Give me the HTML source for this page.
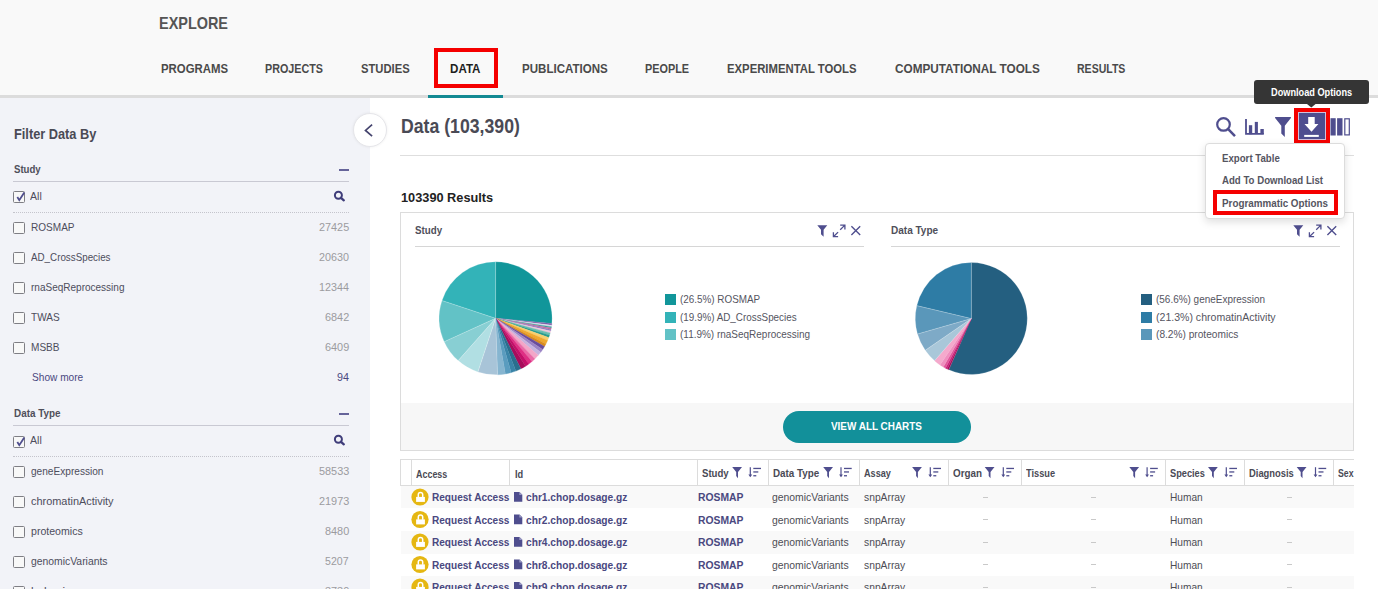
<!DOCTYPE html>
<html><head><meta charset="utf-8"><style>
html,body{margin:0;padding:0;width:1378px;height:589px;overflow:hidden;background:#fff;}
body{position:relative;font-family:"Liberation Sans",sans-serif;}
.t{position:absolute;white-space:nowrap;line-height:1;font-family:"Liberation Sans",sans-serif;}
.cb{position:absolute;width:10px;height:10px;border:1px solid #7e7e84;background:#f8f8f8;border-radius:1.5px;}
</style></head><body>
<div style="position:absolute;left:0;top:0;width:1378px;height:95px;background:#f9f9f9"></div>
<div style="position:absolute;left:0;top:95px;width:1378px;height:3px;background:#dcdcdc"></div>
<div style="position:absolute;left:428px;top:95px;width:75px;height:3px;background:#138a93"></div>
<div class="t" style="left:159.30px;top:15px;font-size:17px;font-weight:bold;color:#555;letter-spacing:0.000px;transform:scaleX(0.8492);transform-origin:0 0;">EXPLORE</div>
<div class="t" style="left:160.50px;top:62px;font-size:13.5px;font-weight:bold;color:#4a4a4a;letter-spacing:0.000px;transform:scaleX(0.8428);transform-origin:0 0;">PROGRAMS</div>
<div class="t" style="left:265.00px;top:62px;font-size:13.5px;font-weight:bold;color:#4a4a4a;letter-spacing:0.000px;transform:scaleX(0.7973);transform-origin:0 0;">PROJECTS</div>
<div class="t" style="left:360.60px;top:62px;font-size:13.5px;font-weight:bold;color:#4a4a4a;letter-spacing:0.000px;transform:scaleX(0.8325);transform-origin:0 0;">STUDIES</div>
<div class="t" style="left:450.30px;top:62px;font-size:13.5px;font-weight:bold;color:#1e1e1e;letter-spacing:0.000px;transform:scaleX(0.8592);transform-origin:0 0;">DATA</div>
<div class="t" style="left:521.60px;top:62px;font-size:13.5px;font-weight:bold;color:#4a4a4a;letter-spacing:0.000px;transform:scaleX(0.8559);transform-origin:0 0;">PUBLICATIONS</div>
<div class="t" style="left:645.00px;top:62px;font-size:13.5px;font-weight:bold;color:#4a4a4a;letter-spacing:0.000px;transform:scaleX(0.8037);transform-origin:0 0;">PEOPLE</div>
<div class="t" style="left:727.20px;top:62px;font-size:13.5px;font-weight:bold;color:#4a4a4a;letter-spacing:0.000px;transform:scaleX(0.8382);transform-origin:0 0;">EXPERIMENTAL TOOLS</div>
<div class="t" style="left:894.80px;top:62px;font-size:13.5px;font-weight:bold;color:#4a4a4a;letter-spacing:0.000px;transform:scaleX(0.8710);transform-origin:0 0;">COMPUTATIONAL TOOLS</div>
<div class="t" style="left:1077.00px;top:62px;font-size:13.5px;font-weight:bold;color:#4a4a4a;letter-spacing:0.000px;transform:scaleX(0.7806);transform-origin:0 0;">RESULTS</div>
<div style="position:absolute;left:434px;top:47.6px;width:55.6px;height:32.7px;border:4.3px solid #f50000"></div>
<div style="position:absolute;left:0;top:98px;width:370px;height:491px;background:#f2f3f8"></div>
<div class="t" style="left:13.70px;top:127px;font-size:14px;font-weight:bold;color:#4a4a55;letter-spacing:0.000px;transform:scaleX(0.9119);transform-origin:0 0;">Filter Data By</div>
<div class="t" style="left:13.50px;top:164px;font-size:11.5px;font-weight:bold;color:#4f4f5a;letter-spacing:0.000px;transform:scaleX(0.8357);transform-origin:0 0;">Study</div>
<div style="position:absolute;left:339px;top:168.9px;width:10px;height:2px;background:#66649a"></div>
<div style="position:absolute;left:13px;top:181px;width:336px;height:1px;background:#c9c9d3"></div>
<div class="cb" style="left:13px;top:191.2px"></div>
<svg style="position:absolute;left:13px;top:190.2px" width="14" height="14" viewBox="0 0 14 14"><path d="M4.3 7 L6.3 10.2 L11.3 2.6" fill="none" stroke="#4f4e8e" stroke-width="1.8"/></svg>
<div class="t" style="left:30.20px;top:191px;font-size:11px;font-weight:normal;color:#4d4d5c;letter-spacing:0.000px;transform:scaleX(0.9590);transform-origin:0 0;">All</div>
<svg style="position:absolute;left:333px;top:189.8px" width="13" height="12" viewBox="0 0 13 12"><circle cx="5.4" cy="5.2" r="3.5" fill="none" stroke="#3f3d7a" stroke-width="2"/><path d="M8 7.8 L10.8 10.3" stroke="#3f3d7a" stroke-width="2.3" stroke-linecap="round"/></svg>
<div style="position:absolute;left:13px;top:211.5px;width:336px;height:0;border-top:1px dotted #c4c4cc"></div>
<div class="cb" style="left:13px;top:222.1px"></div>
<div class="t" style="left:30.50px;top:222px;font-size:11px;font-weight:normal;color:#4d4d5c;letter-spacing:0.000px;transform:scaleX(0.9129);transform-origin:0 0;">ROSMAP</div>
<div class="t" style="left:318.70px;top:222px;font-size:11px;font-weight:normal;color:#9b9b9f;letter-spacing:0.000px;transform:scaleX(0.9869);transform-origin:0 0;">27425</div>
<div class="cb" style="left:13px;top:252.1px"></div>
<div class="t" style="left:30.50px;top:252px;font-size:11px;font-weight:normal;color:#4d4d5c;letter-spacing:0.000px;transform:scaleX(0.8908);transform-origin:0 0;">AD_CrossSpecies</div>
<div class="t" style="left:319.00px;top:252px;font-size:11px;font-weight:normal;color:#9b9b9f;letter-spacing:0.000px;transform:scaleX(0.9771);transform-origin:0 0;">20630</div>
<div class="cb" style="left:13px;top:282.1px"></div>
<div class="t" style="left:30.50px;top:282px;font-size:11px;font-weight:normal;color:#4d4d5c;letter-spacing:0.000px;transform:scaleX(0.9100);transform-origin:0 0;">rnaSeqReprocessing</div>
<div class="t" style="left:319.00px;top:282px;font-size:11px;font-weight:normal;color:#9b9b9f;letter-spacing:0.000px;transform:scaleX(0.9771);transform-origin:0 0;">12344</div>
<div class="cb" style="left:13px;top:312.1px"></div>
<div class="t" style="left:30.50px;top:312px;font-size:11px;font-weight:normal;color:#4d4d5c;letter-spacing:0.000px;transform:scaleX(0.9155);transform-origin:0 0;">TWAS</div>
<div class="t" style="left:324.70px;top:312px;font-size:11px;font-weight:normal;color:#9b9b9f;letter-spacing:0.000px;transform:scaleX(0.9898);transform-origin:0 0;">6842</div>
<div class="cb" style="left:13px;top:342.1px"></div>
<div class="t" style="left:30.50px;top:342px;font-size:11px;font-weight:normal;color:#4d4d5c;letter-spacing:0.000px;transform:scaleX(0.9149);transform-origin:0 0;">MSBB</div>
<div class="t" style="left:324.70px;top:342px;font-size:11px;font-weight:normal;color:#9b9b9f;letter-spacing:0.000px;transform:scaleX(0.9898);transform-origin:0 0;">6409</div>
<div class="t" style="left:32.00px;top:372px;font-size:11px;font-weight:normal;color:#4a4880;letter-spacing:0.000px;transform:scaleX(0.9200);transform-origin:0 0;">Show more</div>
<div class="t" style="left:337.00px;top:372px;font-size:11px;font-weight:normal;color:#4a4880;letter-spacing:0.000px;transform:scaleX(0.9796);transform-origin:0 0;">94</div>
<div class="t" style="left:13.50px;top:408px;font-size:11.5px;font-weight:bold;color:#4f4f5a;letter-spacing:0.000px;transform:scaleX(0.8595);transform-origin:0 0;">Data Type</div>
<div style="position:absolute;left:339px;top:412.8px;width:10px;height:2px;background:#66649a"></div>
<div style="position:absolute;left:13px;top:425px;width:336px;height:1px;background:#c9c9d3"></div>
<div class="cb" style="left:13px;top:435.5px"></div>
<svg style="position:absolute;left:13px;top:434.5px" width="14" height="14" viewBox="0 0 14 14"><path d="M4.3 7 L6.3 10.2 L11.3 2.6" fill="none" stroke="#4f4e8e" stroke-width="1.8"/></svg>
<div class="t" style="left:30.20px;top:435px;font-size:11px;font-weight:normal;color:#4d4d5c;letter-spacing:0.000px;transform:scaleX(0.9590);transform-origin:0 0;">All</div>
<svg style="position:absolute;left:333px;top:434.1px" width="13" height="12" viewBox="0 0 13 12"><circle cx="5.4" cy="5.2" r="3.5" fill="none" stroke="#3f3d7a" stroke-width="2"/><path d="M8 7.8 L10.8 10.3" stroke="#3f3d7a" stroke-width="2.3" stroke-linecap="round"/></svg>
<div style="position:absolute;left:13px;top:455.8px;width:336px;height:0;border-top:1px dotted #c4c4cc"></div>
<div class="cb" style="left:13px;top:465.9px"></div>
<div class="t" style="left:30.50px;top:466px;font-size:11px;font-weight:normal;color:#4d4d5c;letter-spacing:0.000px;transform:scaleX(0.9189);transform-origin:0 0;">geneExpression</div>
<div class="t" style="left:318.60px;top:466px;font-size:11px;font-weight:normal;color:#9b9b9f;letter-spacing:0.000px;transform:scaleX(0.9902);transform-origin:0 0;">58533</div>
<div class="cb" style="left:13px;top:495.9px"></div>
<div class="t" style="left:30.50px;top:496px;font-size:11px;font-weight:normal;color:#4d4d5c;letter-spacing:0.000px;transform:scaleX(0.9934);transform-origin:0 0;">chromatinActivity</div>
<div class="t" style="left:318.60px;top:496px;font-size:11px;font-weight:normal;color:#9b9b9f;letter-spacing:0.000px;transform:scaleX(0.9902);transform-origin:0 0;">21973</div>
<div class="cb" style="left:13px;top:525.9px"></div>
<div class="t" style="left:30.50px;top:526px;font-size:11px;font-weight:normal;color:#4d4d5c;letter-spacing:0.000px;transform:scaleX(0.9610);transform-origin:0 0;">proteomics</div>
<div class="t" style="left:324.70px;top:526px;font-size:11px;font-weight:normal;color:#9b9b9f;letter-spacing:0.000px;transform:scaleX(0.9898);transform-origin:0 0;">8480</div>
<div class="cb" style="left:13px;top:555.9px"></div>
<div class="t" style="left:30.50px;top:556px;font-size:11px;font-weight:normal;color:#4d4d5c;letter-spacing:0.000px;transform:scaleX(0.9433);transform-origin:0 0;">genomicVariants</div>
<div class="t" style="left:325.40px;top:556px;font-size:11px;font-weight:normal;color:#9b9b9f;letter-spacing:0.000px;transform:scaleX(0.9611);transform-origin:0 0;">5207</div>
<div class="cb" style="left:13px;top:585.9px"></div>
<div class="t" style="left:30.50px;top:586px;font-size:11px;font-weight:normal;color:#4d4d5c;letter-spacing:0.000px;transform:scaleX(1.0545);transform-origin:0 0;">behavior</div>
<div class="t" style="left:324.70px;top:586px;font-size:11px;font-weight:normal;color:#9b9b9f;letter-spacing:0.000px;transform:scaleX(0.9898);transform-origin:0 0;">3730</div>
<div style="position:absolute;left:352.7px;top:112.7px;width:32.6px;height:32.6px;border-radius:50%;background:#fff;border:1px solid #e6e6ea;box-shadow:0 0 3px rgba(0,0,0,0.07)"></div>
<svg style="position:absolute;left:362px;top:122px" width="14" height="16" viewBox="0 0 14 16"><path d="M10.1 2.6 L3.5 8.4 L10.1 14.2" fill="none" stroke="#45446e" stroke-width="1.7"/></svg>
<div class="t" style="left:400.70px;top:117px;font-size:19.5px;font-weight:bold;color:#4a4a55;letter-spacing:0.000px;transform:scaleX(0.9066);transform-origin:0 0;">Data (103,390)</div>
<div style="position:absolute;left:400px;top:155px;width:954px;height:1px;background:#dedede"></div>
<div class="t" style="left:401.30px;top:191px;font-size:13px;font-weight:bold;color:#222;letter-spacing:0.000px;transform:scaleX(0.9814);transform-origin:0 0;">103390 Results</div>
<svg style="position:absolute;left:1210px;top:110px" width="145" height="32" viewBox="1210 110 145 32">
<circle cx="1223.5" cy="124.4" r="6.3" fill="none" stroke="#4f4e8e" stroke-width="2.2"/>
<path d="M1228.2 129.1 L1235 136.2" stroke="#4f4e8e" stroke-width="2.5"/>
<path d="M1246 119.1 V133.8 H1263.8" fill="none" stroke="#4f4e8e" stroke-width="1.8"/>
<rect x="1248.9" y="125.2" width="3.3" height="9" fill="#4f4e8e"/>
<rect x="1254.8" y="121.9" width="3.1" height="12" fill="#4f4e8e"/>
<rect x="1260.4" y="129" width="3.4" height="5" fill="#4f4e8e"/>
<path d="M1275.1 117.1 H1290.9 V118 L1284.8 125.75 V137 L1281.3 133.4 V125.75 L1275.1 118 Z" fill="#4f4e8e"/>
<rect x="1330.5" y="118.2" width="5.2" height="17.3" fill="#4f4e8e"/>
<rect x="1337.1" y="118.2" width="5.4" height="17.3" fill="#4f4e8e"/>
<rect x="1344.8" y="118.8" width="4.5" height="16.1" fill="none" stroke="#4f4e8e" stroke-width="1.2"/>
</svg>
<div style="position:absolute;left:1294px;top:107.7px;width:28px;height:28px;border:4px solid #f50000;background:#4e4d8f;box-shadow:inset 0 0 0 1px #d0c0dc"></div>
<svg style="position:absolute;left:1298px;top:112px" width="28" height="28" viewBox="1298 112 28 28">
<path d="M1308.2 116.9 H1314.7 V124 H1318.4 L1311.5 131.8 L1304.5 124 H1308.2 Z" fill="#fff"/>
<rect x="1304.2" y="134.9" width="14.6" height="2" fill="#fff"/>
</svg>
<div style="position:absolute;left:1254px;top:80.2px;width:115px;height:23.6px;background:#353535;border-radius:3px"></div>
<svg style="position:absolute;left:1305px;top:103px" width="13" height="5" viewBox="0 0 13 5"><path d="M0.8 0 L6.3 4.5 L11.8 0 Z" fill="#353535"/></svg>
<div class="t" style="left:1270.60px;top:88px;font-size:10px;font-weight:bold;color:#fff;letter-spacing:0.000px;transform:scaleX(0.9191);transform-origin:0 0;">Download Options</div>
<div style="position:absolute;left:400px;top:212px;width:952px;height:237px;border:1px solid #dcdcdc;background:#fff"></div>
<div style="position:absolute;left:401px;top:403px;width:952px;height:47px;background:#f7f7f7"></div>
<div style="position:absolute;left:782.6px;top:410.9px;width:188.4px;height:31.9px;border-radius:16px;background:#12909a"></div>
<div class="t" style="left:831.40px;top:421px;font-size:11px;font-weight:bold;color:#fff;letter-spacing:0.000px;transform:scaleX(0.9013);transform-origin:0 0;">VIEW ALL CHARTS</div>
<div class="t" style="left:414.70px;top:225px;font-size:11px;font-weight:bold;color:#4f4f5a;letter-spacing:0.000px;transform:scaleX(0.8871);transform-origin:0 0;">Study</div>
<div style="position:absolute;left:415px;top:246px;width:449px;height:1px;background:#d6d6d6"></div>
<svg style="position:absolute;left:816.8px;top:223px" width="48" height="16" viewBox="0 0 48 16">
<path d="M0.3 2.2 H10.3 L6.6 6.8 V13.8 L4 11.2 V6.8 Z" fill="#4f4e8e"/>
<path d="M16.9 13.2 L21.1 9.1 M16.4 9.2 V13.7 H21.1" fill="none" stroke="#4f4e8e" stroke-width="1.3"/>
<path d="M27.4 2.6 L23.2 6.7 M23.2 2.1 H27.9 V6.6" fill="none" stroke="#4f4e8e" stroke-width="1.3"/>
<path d="M34.4 3.2 L43.2 12 M43.2 3.2 L34.4 12" fill="none" stroke="#4f4e8e" stroke-width="1.35"/>
</svg>
<div class="t" style="left:890.60px;top:225px;font-size:11px;font-weight:bold;color:#4f4f5a;letter-spacing:0.000px;transform:scaleX(0.9101);transform-origin:0 0;">Data Type</div>
<div style="position:absolute;left:891px;top:246px;width:449px;height:1px;background:#d6d6d6"></div>
<svg style="position:absolute;left:1292.8px;top:223px" width="48" height="16" viewBox="0 0 48 16">
<path d="M0.3 2.2 H10.3 L6.6 6.8 V13.8 L4 11.2 V6.8 Z" fill="#4f4e8e"/>
<path d="M16.9 13.2 L21.1 9.1 M16.4 9.2 V13.7 H21.1" fill="none" stroke="#4f4e8e" stroke-width="1.3"/>
<path d="M27.4 2.6 L23.2 6.7 M23.2 2.1 H27.9 V6.6" fill="none" stroke="#4f4e8e" stroke-width="1.3"/>
<path d="M34.4 3.2 L43.2 12 M43.2 3.2 L34.4 12" fill="none" stroke="#4f4e8e" stroke-width="1.35"/>
</svg>
<div style="position:absolute;left:665px;top:294.3px;width:11px;height:10.5px;background:#11969a"></div>
<div class="t" style="left:679.70px;top:294px;font-size:11px;font-weight:normal;color:#55555f;letter-spacing:0.000px;transform:scaleX(0.8986);transform-origin:0 0;">(26.5%) ROSMAP</div>
<div style="position:absolute;left:665px;top:312.2px;width:11px;height:10.5px;background:#33b3b8"></div>
<div class="t" style="left:679.70px;top:312px;font-size:11px;font-weight:normal;color:#55555f;letter-spacing:0.000px;transform:scaleX(0.8955);transform-origin:0 0;">(19.9%) AD_CrossSpecies</div>
<div style="position:absolute;left:665px;top:329.4px;width:11px;height:10.5px;background:#62c2c6"></div>
<div class="t" style="left:679.70px;top:329px;font-size:11px;font-weight:normal;color:#55555f;letter-spacing:0.000px;transform:scaleX(0.9066);transform-origin:0 0;">(11.9%) rnaSeqReprocessing</div>
<div style="position:absolute;left:1141.1px;top:294.3px;width:11px;height:10.5px;background:#245f80"></div>
<div class="t" style="left:1155.70px;top:294px;font-size:11px;font-weight:normal;color:#55555f;letter-spacing:0.000px;transform:scaleX(0.9049);transform-origin:0 0;">(56.6%) geneExpression</div>
<div style="position:absolute;left:1141.1px;top:312.2px;width:11px;height:10.5px;background:#2e7ca5"></div>
<div class="t" style="left:1155.70px;top:312px;font-size:11px;font-weight:normal;color:#55555f;letter-spacing:0.000px;transform:scaleX(0.9591);transform-origin:0 0;">(21.3%) chromatinActivity</div>
<div style="position:absolute;left:1141.1px;top:329.4px;width:11px;height:10.5px;background:#5a97ba"></div>
<div class="t" style="left:1155.70px;top:329px;font-size:11px;font-weight:normal;color:#55555f;letter-spacing:0.000px;transform:scaleX(0.9221);transform-origin:0 0;">(8.2%) proteomics</div>
<svg style="position:absolute;left:0;top:0" width="1378" height="589"><path d="M495.6 318.3 L495.60 261.80 A56.5 56.5 0 0 1 551.85 323.62 Z" fill="#11969a" stroke="rgba(255,255,255,0.55)" stroke-width="0.35"/><path d="M495.6 318.3 L551.85 323.62 A56.5 56.5 0 0 1 551.68 325.19 Z" fill="#7b5ea8" stroke="#7b5ea8" stroke-width="0.3"/><path d="M495.6 318.3 L551.68 325.19 A56.5 56.5 0 0 1 551.48 326.65 Z" fill="#e6e0f0" stroke="#e6e0f0" stroke-width="0.3"/><path d="M495.6 318.3 L551.48 326.65 A56.5 56.5 0 0 1 551.24 328.11 Z" fill="#3aa39b" stroke="#3aa39b" stroke-width="0.3"/><path d="M495.6 318.3 L551.24 328.11 A56.5 56.5 0 0 1 550.97 329.56 Z" fill="#c86aa0" stroke="#c86aa0" stroke-width="0.3"/><path d="M495.6 318.3 L550.97 329.56 A56.5 56.5 0 0 1 550.65 331.01 Z" fill="#8d7cc0" stroke="#8d7cc0" stroke-width="0.3"/><path d="M495.6 318.3 L550.65 331.01 A56.5 56.5 0 0 1 550.17 332.92 Z" fill="#f2c8dc" stroke="#f2c8dc" stroke-width="0.3"/><path d="M495.6 318.3 L550.17 332.92 A56.5 56.5 0 0 1 549.49 335.29 Z" fill="#6dbfb0" stroke="#6dbfb0" stroke-width="0.3"/><path d="M495.6 318.3 L549.49 335.29 A56.5 56.5 0 0 1 548.69 337.62 Z" fill="#2a9d8f" stroke="#2a9d8f" stroke-width="0.3"/><path d="M495.6 318.3 L548.69 337.62 A56.5 56.5 0 0 1 547.61 340.38 Z" fill="#f7d070" stroke="#f7d070" stroke-width="0.3"/><path d="M495.6 318.3 L547.61 340.38 A56.5 56.5 0 0 1 545.94 343.95 Z" fill="#efa92e" stroke="#efa92e" stroke-width="0.3"/><path d="M495.6 318.3 L545.94 343.95 A56.5 56.5 0 0 1 544.53 346.55 Z" fill="#d98c1f" stroke="#d98c1f" stroke-width="0.3"/><path d="M495.6 318.3 L544.53 346.55 A56.5 56.5 0 0 1 542.71 349.48 Z" fill="#6a4d9c" stroke="#6a4d9c" stroke-width="0.3"/><path d="M495.6 318.3 L542.71 349.48 A56.5 56.5 0 0 1 540.72 352.30 Z" fill="#9b84c6" stroke="#9b84c6" stroke-width="0.3"/><path d="M495.6 318.3 L540.72 352.30 A56.5 56.5 0 0 1 538.24 355.37 Z" fill="#c6b3de" stroke="#c6b3de" stroke-width="0.3"/><path d="M495.6 318.3 L538.24 355.37 A56.5 56.5 0 0 1 534.85 358.94 Z" fill="#f3a6c8" stroke="#f3a6c8" stroke-width="0.3"/><path d="M495.6 318.3 L534.85 358.94 A56.5 56.5 0 0 1 531.92 361.58 Z" fill="#ea6aa7" stroke="#ea6aa7" stroke-width="0.3"/><path d="M495.6 318.3 L531.92 361.58 A56.5 56.5 0 0 1 528.81 364.01 Z" fill="#df2f84" stroke="#df2f84" stroke-width="0.3"/><path d="M495.6 318.3 L528.81 364.01 A56.5 56.5 0 0 1 525.54 366.21 Z" fill="#c50f6a" stroke="#c50f6a" stroke-width="0.3"/><path d="M495.6 318.3 L525.54 366.21 A56.5 56.5 0 0 1 520.81 368.86 Z" fill="#a80c5c" stroke="#a80c5c" stroke-width="0.3"/><path d="M495.6 318.3 L520.81 368.86 A56.5 56.5 0 0 1 515.85 371.05 Z" fill="#2a6e8e" stroke="#2a6e8e" stroke-width="0.3"/><path d="M495.6 318.3 L515.85 371.05 A56.5 56.5 0 0 1 511.17 372.61 Z" fill="#3a84a8" stroke="#3a84a8" stroke-width="0.3"/><path d="M495.6 318.3 L511.17 372.61 A56.5 56.5 0 0 1 505.41 373.94 Z" fill="#5a9cbf" stroke="#5a9cbf" stroke-width="0.3"/><path d="M495.6 318.3 L505.41 373.94 A56.5 56.5 0 0 1 497.57 374.77 Z" fill="#86b5d0" stroke="#86b5d0" stroke-width="0.3"/><path d="M495.6 318.3 L497.57 374.77 A56.5 56.5 0 0 1 477.86 371.94 Z" fill="#a8c4d8" stroke="rgba(255,255,255,0.55)" stroke-width="0.35"/><path d="M495.6 318.3 L477.86 371.94 A56.5 56.5 0 0 1 458.16 360.62 Z" fill="#b1dfe3" stroke="rgba(255,255,255,0.55)" stroke-width="0.35"/><path d="M495.6 318.3 L458.16 360.62 A56.5 56.5 0 0 1 444.15 341.64 Z" fill="#88cfd3" stroke="rgba(255,255,255,0.55)" stroke-width="0.35"/><path d="M495.6 318.3 L444.15 341.64 A56.5 56.5 0 0 1 441.99 300.47 Z" fill="#62c2c6" stroke="rgba(255,255,255,0.55)" stroke-width="0.35"/><path d="M495.6 318.3 L441.99 300.47 A56.5 56.5 0 0 1 495.60 261.80 Z" fill="#33b3b8" stroke="rgba(255,255,255,0.55)" stroke-width="0.35"/><path d="M971.3 318.5 L971.30 262.50 A56 56 0 1 1 948.70 369.74 Z" fill="#245f80" stroke="rgba(255,255,255,0.55)" stroke-width="0.35"/><path d="M971.3 318.5 L948.70 369.74 A56 56 0 0 1 947.19 369.04 Z" fill="#a0105a" stroke="#a0105a" stroke-width="0.3"/><path d="M971.3 318.5 L947.19 369.04 A56 56 0 0 1 945.44 368.17 Z" fill="#c8207a" stroke="#c8207a" stroke-width="0.3"/><path d="M971.3 318.5 L945.44 368.17 A56 56 0 0 1 943.30 367.00 Z" fill="#e0559a" stroke="#e0559a" stroke-width="0.3"/><path d="M971.3 318.5 L943.30 367.00 A56 56 0 0 1 939.99 364.93 Z" fill="#ef8fbf" stroke="#ef8fbf" stroke-width="0.3"/><path d="M971.3 318.5 L939.99 364.93 A56 56 0 0 1 934.56 360.76 Z" fill="#f4a9cc" stroke="#f4a9cc" stroke-width="0.3"/><path d="M971.3 318.5 L934.56 360.76 A56 56 0 0 1 925.20 350.30 Z" fill="#a9c7d9" stroke="rgba(255,255,255,0.55)" stroke-width="0.35"/><path d="M971.3 318.5 L925.20 350.30 A56 56 0 0 1 917.47 333.94 Z" fill="#7eaac7" stroke="rgba(255,255,255,0.55)" stroke-width="0.35"/><path d="M971.3 318.5 L917.47 333.94 A56 56 0 0 1 916.80 305.62 Z" fill="#5a97ba" stroke="rgba(255,255,255,0.55)" stroke-width="0.35"/><path d="M971.3 318.5 L916.80 305.62 A56 56 0 0 1 971.30 262.50 Z" fill="#2e7ca5" stroke="rgba(255,255,255,0.55)" stroke-width="0.35"/></svg>
<div style="position:absolute;left:400.5px;top:485px;width:953.5px;height:23px;background:#f9f9f9"></div>
<div style="position:absolute;left:400.5px;top:531px;width:953.5px;height:23px;background:#f9f9f9"></div>
<div style="position:absolute;left:400.5px;top:575.5px;width:953.5px;height:20px;background:#f9f9f9"></div>
<div style="position:absolute;left:400px;top:459px;width:954px;height:27px;border-top:1px solid #dcdcdc;border-bottom:1px solid #dcdcdc;border-left:1px solid #dcdcdc;box-sizing:border-box;background:#fff"></div>
<div style="position:absolute;left:411.2px;top:460px;width:1px;height:25.5px;background:#dcdcdc"></div>
<div style="position:absolute;left:509.2px;top:460px;width:1px;height:25.5px;background:#dcdcdc"></div>
<div style="position:absolute;left:697.2px;top:460px;width:1px;height:25.5px;background:#dcdcdc"></div>
<div style="position:absolute;left:767.9px;top:460px;width:1px;height:25.5px;background:#dcdcdc"></div>
<div style="position:absolute;left:859.0px;top:460px;width:1px;height:25.5px;background:#dcdcdc"></div>
<div style="position:absolute;left:947.9px;top:460px;width:1px;height:25.5px;background:#dcdcdc"></div>
<div style="position:absolute;left:1021.0px;top:460px;width:1px;height:25.5px;background:#dcdcdc"></div>
<div style="position:absolute;left:1164.7px;top:460px;width:1px;height:25.5px;background:#dcdcdc"></div>
<div style="position:absolute;left:1243.7px;top:460px;width:1px;height:25.5px;background:#dcdcdc"></div>
<div style="position:absolute;left:1332.9px;top:460px;width:1px;height:25.5px;background:#dcdcdc"></div>
<div class="t" style="left:415.90px;top:469px;font-size:11px;font-weight:bold;color:#4a4a55;letter-spacing:0.000px;transform:scaleX(0.8119);transform-origin:0 0;">Access</div>
<div class="t" style="left:514.70px;top:469px;font-size:11px;font-weight:bold;color:#4a4a55;letter-spacing:0.000px;transform:scaleX(0.8367);transform-origin:0 0;">Id</div>
<div class="t" style="left:701.70px;top:468px;font-size:11px;font-weight:bold;color:#4a4a55;letter-spacing:0.000px;transform:scaleX(0.8740);transform-origin:0 0;">Study</div>
<div class="t" style="left:773.30px;top:468px;font-size:11px;font-weight:bold;color:#4a4a55;letter-spacing:0.000px;transform:scaleX(0.8947);transform-origin:0 0;">Data Type</div>
<div class="t" style="left:864.00px;top:468px;font-size:11px;font-weight:bold;color:#4a4a55;letter-spacing:0.000px;transform:scaleX(0.8302);transform-origin:0 0;">Assay</div>
<div class="t" style="left:953.00px;top:468px;font-size:11px;font-weight:bold;color:#4a4a55;letter-spacing:0.000px;transform:scaleX(0.8951);transform-origin:0 0;">Organ</div>
<div class="t" style="left:1026.40px;top:468px;font-size:11px;font-weight:bold;color:#4a4a55;letter-spacing:0.000px;transform:scaleX(0.8398);transform-origin:0 0;">Tissue</div>
<div class="t" style="left:1169.60px;top:468px;font-size:11px;font-weight:bold;color:#4a4a55;letter-spacing:0.000px;transform:scaleX(0.8389);transform-origin:0 0;">Species</div>
<div class="t" style="left:1248.90px;top:468px;font-size:11px;font-weight:bold;color:#4a4a55;letter-spacing:0.000px;transform:scaleX(0.8525);transform-origin:0 0;">Diagnosis</div>
<svg style="position:absolute;left:0;top:0" width="1378" height="589"><path d="M732.2 467.1 H742.0 L738.0 472 V478.3 L736.2 476 V472 Z" fill="#4f4e8e"/><path d="M750.3 467.2 V476.2" fill="none" stroke="#4f4e8e" stroke-width="1.2"/><path d="M748.4 474.6 L750.3 477.2 L752.2 474.6 Z" fill="#4f4e8e"/><rect x="753.3" y="467.8" width="7.7" height="1.3" fill="#4f4e8e"/><rect x="753.3" y="471.3" width="5" height="1.3" fill="#4f4e8e"/><rect x="753.3" y="475.1" width="3" height="1.3" fill="#4f4e8e"/><path d="M823.2 467.1 H833.0 L829.0 472 V478.3 L827.2 476 V472 Z" fill="#4f4e8e"/><path d="M841.0 467.2 V476.2" fill="none" stroke="#4f4e8e" stroke-width="1.2"/><path d="M839.1 474.6 L841.0 477.2 L842.9000000000001 474.6 Z" fill="#4f4e8e"/><rect x="844.0" y="467.8" width="7.7" height="1.3" fill="#4f4e8e"/><rect x="844.0" y="471.3" width="5" height="1.3" fill="#4f4e8e"/><rect x="844.0" y="475.1" width="3" height="1.3" fill="#4f4e8e"/><path d="M912.1 467.1 H921.9 L917.9 472 V478.3 L916.1 476 V472 Z" fill="#4f4e8e"/><path d="M930.3 467.2 V476.2" fill="none" stroke="#4f4e8e" stroke-width="1.2"/><path d="M928.4 474.6 L930.3 477.2 L932.2 474.6 Z" fill="#4f4e8e"/><rect x="933.3" y="467.8" width="7.7" height="1.3" fill="#4f4e8e"/><rect x="933.3" y="471.3" width="5" height="1.3" fill="#4f4e8e"/><rect x="933.3" y="475.1" width="3" height="1.3" fill="#4f4e8e"/><path d="M984.7 467.1 H994.5 L990.5 472 V478.3 L988.7 476 V472 Z" fill="#4f4e8e"/><path d="M1003.3 467.2 V476.2" fill="none" stroke="#4f4e8e" stroke-width="1.2"/><path d="M1001.4 474.6 L1003.3 477.2 L1005.2 474.6 Z" fill="#4f4e8e"/><rect x="1006.3" y="467.8" width="7.7" height="1.3" fill="#4f4e8e"/><rect x="1006.3" y="471.3" width="5" height="1.3" fill="#4f4e8e"/><rect x="1006.3" y="475.1" width="3" height="1.3" fill="#4f4e8e"/><path d="M1129.3 467.1 H1139.1 L1135.1 472 V478.3 L1133.3 476 V472 Z" fill="#4f4e8e"/><path d="M1147.1 467.2 V476.2" fill="none" stroke="#4f4e8e" stroke-width="1.2"/><path d="M1145.2 474.6 L1147.1 477.2 L1149.0 474.6 Z" fill="#4f4e8e"/><rect x="1150.1" y="467.8" width="7.7" height="1.3" fill="#4f4e8e"/><rect x="1150.1" y="471.3" width="5" height="1.3" fill="#4f4e8e"/><rect x="1150.1" y="475.1" width="3" height="1.3" fill="#4f4e8e"/><path d="M1208 467.1 H1217.8 L1213.8 472 V478.3 L1212 476 V472 Z" fill="#4f4e8e"/><path d="M1226.3 467.2 V476.2" fill="none" stroke="#4f4e8e" stroke-width="1.2"/><path d="M1224.4 474.6 L1226.3 477.2 L1228.2 474.6 Z" fill="#4f4e8e"/><rect x="1229.3" y="467.8" width="7.7" height="1.3" fill="#4f4e8e"/><rect x="1229.3" y="471.3" width="5" height="1.3" fill="#4f4e8e"/><rect x="1229.3" y="475.1" width="3" height="1.3" fill="#4f4e8e"/><path d="M1296.7 467.1 H1306.5 L1302.5 472 V478.3 L1300.7 476 V472 Z" fill="#4f4e8e"/><path d="M1315.5 467.2 V476.2" fill="none" stroke="#4f4e8e" stroke-width="1.2"/><path d="M1313.6000000000001 474.6 L1315.5 477.2 L1317.4 474.6 Z" fill="#4f4e8e"/><rect x="1318.5" y="467.8" width="7.7" height="1.3" fill="#4f4e8e"/><rect x="1318.5" y="471.3" width="5" height="1.3" fill="#4f4e8e"/><rect x="1318.5" y="475.1" width="3" height="1.3" fill="#4f4e8e"/></svg>
<div class="t" style="left:1338.00px;top:468px;font-size:11px;font-weight:bold;color:#4a4a55;letter-spacing:0.000px;transform:scaleX(0.7928);transform-origin:0 0;">Sex</div>
<div class="t" style="left:432.00px;top:492px;font-size:11px;font-weight:bold;color:#4a4880;letter-spacing:0.000px;transform:scaleX(0.9149);transform-origin:0 0;">Request Access</div>
<div class="t" style="left:525.50px;top:492px;font-size:11px;font-weight:bold;color:#4a4880;letter-spacing:0.000px;transform:scaleX(0.9269);transform-origin:0 0;">chr1.chop.dosage.gz</div>
<div class="t" style="left:698.00px;top:492px;font-size:11px;font-weight:bold;color:#4a4880;letter-spacing:0.000px;transform:scaleX(0.9400);transform-origin:0 0;">ROSMAP</div>
<div class="t" style="left:772.40px;top:492px;font-size:11px;font-weight:normal;color:#4d4d55;letter-spacing:0.000px;transform:scaleX(0.9445);transform-origin:0 0;">genomicVariants</div>
<div class="t" style="left:863.70px;top:492px;font-size:11px;font-weight:normal;color:#4d4d55;letter-spacing:0.000px;transform:scaleX(0.9364);transform-origin:0 0;">snpArray</div>
<div class="t" style="left:1169.60px;top:492px;font-size:11px;font-weight:normal;color:#4d4d55;letter-spacing:0.000px;transform:scaleX(0.9224);transform-origin:0 0;">Human</div>
<div style="position:absolute;left:982.9px;top:496.7px;width:5px;height:1px;background:#c9c9c9"></div>
<div style="position:absolute;left:1090.8px;top:496.7px;width:5px;height:1px;background:#c9c9c9"></div>
<div style="position:absolute;left:1286.6px;top:496.7px;width:5px;height:1px;background:#c9c9c9"></div>
<div class="t" style="left:432.00px;top:515px;font-size:11px;font-weight:bold;color:#4a4880;letter-spacing:0.000px;transform:scaleX(0.9149);transform-origin:0 0;">Request Access</div>
<div class="t" style="left:525.50px;top:515px;font-size:11px;font-weight:bold;color:#4a4880;letter-spacing:0.000px;transform:scaleX(0.9269);transform-origin:0 0;">chr2.chop.dosage.gz</div>
<div class="t" style="left:698.00px;top:515px;font-size:11px;font-weight:bold;color:#4a4880;letter-spacing:0.000px;transform:scaleX(0.9400);transform-origin:0 0;">ROSMAP</div>
<div class="t" style="left:772.40px;top:515px;font-size:11px;font-weight:normal;color:#4d4d55;letter-spacing:0.000px;transform:scaleX(0.9445);transform-origin:0 0;">genomicVariants</div>
<div class="t" style="left:863.70px;top:515px;font-size:11px;font-weight:normal;color:#4d4d55;letter-spacing:0.000px;transform:scaleX(0.9364);transform-origin:0 0;">snpArray</div>
<div class="t" style="left:1169.60px;top:515px;font-size:11px;font-weight:normal;color:#4d4d55;letter-spacing:0.000px;transform:scaleX(0.9224);transform-origin:0 0;">Human</div>
<div style="position:absolute;left:982.9px;top:519.2px;width:5px;height:1px;background:#c9c9c9"></div>
<div style="position:absolute;left:1090.8px;top:519.2px;width:5px;height:1px;background:#c9c9c9"></div>
<div style="position:absolute;left:1286.6px;top:519.2px;width:5px;height:1px;background:#c9c9c9"></div>
<div class="t" style="left:432.00px;top:537px;font-size:11px;font-weight:bold;color:#4a4880;letter-spacing:0.000px;transform:scaleX(0.9149);transform-origin:0 0;">Request Access</div>
<div class="t" style="left:525.50px;top:537px;font-size:11px;font-weight:bold;color:#4a4880;letter-spacing:0.000px;transform:scaleX(0.9269);transform-origin:0 0;">chr4.chop.dosage.gz</div>
<div class="t" style="left:698.00px;top:537px;font-size:11px;font-weight:bold;color:#4a4880;letter-spacing:0.000px;transform:scaleX(0.9400);transform-origin:0 0;">ROSMAP</div>
<div class="t" style="left:772.40px;top:537px;font-size:11px;font-weight:normal;color:#4d4d55;letter-spacing:0.000px;transform:scaleX(0.9445);transform-origin:0 0;">genomicVariants</div>
<div class="t" style="left:863.70px;top:537px;font-size:11px;font-weight:normal;color:#4d4d55;letter-spacing:0.000px;transform:scaleX(0.9364);transform-origin:0 0;">snpArray</div>
<div class="t" style="left:1169.60px;top:537px;font-size:11px;font-weight:normal;color:#4d4d55;letter-spacing:0.000px;transform:scaleX(0.9224);transform-origin:0 0;">Human</div>
<div style="position:absolute;left:982.9px;top:541.7px;width:5px;height:1px;background:#c9c9c9"></div>
<div style="position:absolute;left:1090.8px;top:541.7px;width:5px;height:1px;background:#c9c9c9"></div>
<div style="position:absolute;left:1286.6px;top:541.7px;width:5px;height:1px;background:#c9c9c9"></div>
<div class="t" style="left:432.00px;top:560px;font-size:11px;font-weight:bold;color:#4a4880;letter-spacing:0.000px;transform:scaleX(0.9149);transform-origin:0 0;">Request Access</div>
<div class="t" style="left:525.50px;top:560px;font-size:11px;font-weight:bold;color:#4a4880;letter-spacing:0.000px;transform:scaleX(0.9269);transform-origin:0 0;">chr8.chop.dosage.gz</div>
<div class="t" style="left:698.00px;top:560px;font-size:11px;font-weight:bold;color:#4a4880;letter-spacing:0.000px;transform:scaleX(0.9400);transform-origin:0 0;">ROSMAP</div>
<div class="t" style="left:772.40px;top:560px;font-size:11px;font-weight:normal;color:#4d4d55;letter-spacing:0.000px;transform:scaleX(0.9445);transform-origin:0 0;">genomicVariants</div>
<div class="t" style="left:863.70px;top:560px;font-size:11px;font-weight:normal;color:#4d4d55;letter-spacing:0.000px;transform:scaleX(0.9364);transform-origin:0 0;">snpArray</div>
<div class="t" style="left:1169.60px;top:560px;font-size:11px;font-weight:normal;color:#4d4d55;letter-spacing:0.000px;transform:scaleX(0.9224);transform-origin:0 0;">Human</div>
<div style="position:absolute;left:982.9px;top:564.2px;width:5px;height:1px;background:#c9c9c9"></div>
<div style="position:absolute;left:1090.8px;top:564.2px;width:5px;height:1px;background:#c9c9c9"></div>
<div style="position:absolute;left:1286.6px;top:564.2px;width:5px;height:1px;background:#c9c9c9"></div>
<div class="t" style="left:432.00px;top:582px;font-size:11px;font-weight:bold;color:#4a4880;letter-spacing:0.000px;transform:scaleX(0.9149);transform-origin:0 0;">Request Access</div>
<div class="t" style="left:525.50px;top:582px;font-size:11px;font-weight:bold;color:#4a4880;letter-spacing:0.000px;transform:scaleX(0.9269);transform-origin:0 0;">chr9.chop.dosage.gz</div>
<div class="t" style="left:698.00px;top:582px;font-size:11px;font-weight:bold;color:#4a4880;letter-spacing:0.000px;transform:scaleX(0.9400);transform-origin:0 0;">ROSMAP</div>
<div class="t" style="left:772.40px;top:582px;font-size:11px;font-weight:normal;color:#4d4d55;letter-spacing:0.000px;transform:scaleX(0.9445);transform-origin:0 0;">genomicVariants</div>
<div class="t" style="left:863.70px;top:582px;font-size:11px;font-weight:normal;color:#4d4d55;letter-spacing:0.000px;transform:scaleX(0.9364);transform-origin:0 0;">snpArray</div>
<div class="t" style="left:1169.60px;top:582px;font-size:11px;font-weight:normal;color:#4d4d55;letter-spacing:0.000px;transform:scaleX(0.9224);transform-origin:0 0;">Human</div>
<div style="position:absolute;left:982.9px;top:586.7px;width:5px;height:1px;background:#c9c9c9"></div>
<div style="position:absolute;left:1090.8px;top:586.7px;width:5px;height:1px;background:#c9c9c9"></div>
<div style="position:absolute;left:1286.6px;top:586.7px;width:5px;height:1px;background:#c9c9c9"></div>
<svg style="position:absolute;left:0;top:0" width="1378" height="589"><circle cx="420" cy="497.0" r="8.6" fill="#e5b712"/><path d="M418.3 497.3 V494.6 A2.2 2.2 0 0 1 422.7 494.6 V497.3" fill="none" stroke="#fff" stroke-width="1.5"/><rect x="416.1" y="496.90000000000003" width="8.8" height="5" fill="#fff"/><path d="M514 492.0 H519.5 L522.3 494.8 V501.8 H514 Z" fill="#4f4e8e"/><path d="M519.3 492.0 L522.3 495.0 H519.3 Z" fill="#9a99c4"/><circle cx="420" cy="519.5" r="8.6" fill="#e5b712"/><path d="M418.3 519.8 V517.0999999999999 A2.2 2.2 0 0 1 422.7 517.0999999999999 V519.8" fill="none" stroke="#fff" stroke-width="1.5"/><rect x="416.1" y="519.4" width="8.8" height="5" fill="#fff"/><path d="M514 514.5 H519.5 L522.3 517.3 V524.3 H514 Z" fill="#4f4e8e"/><path d="M519.3 514.5 L522.3 517.5 H519.3 Z" fill="#9a99c4"/><circle cx="420" cy="542.0" r="8.6" fill="#e5b712"/><path d="M418.3 542.3 V539.5999999999999 A2.2 2.2 0 0 1 422.7 539.5999999999999 V542.3" fill="none" stroke="#fff" stroke-width="1.5"/><rect x="416.1" y="541.9" width="8.8" height="5" fill="#fff"/><path d="M514 537.0 H519.5 L522.3 539.8 V546.8 H514 Z" fill="#4f4e8e"/><path d="M519.3 537.0 L522.3 540.0 H519.3 Z" fill="#9a99c4"/><circle cx="420" cy="564.5" r="8.6" fill="#e5b712"/><path d="M418.3 564.8 V562.0999999999999 A2.2 2.2 0 0 1 422.7 562.0999999999999 V564.8" fill="none" stroke="#fff" stroke-width="1.5"/><rect x="416.1" y="564.4" width="8.8" height="5" fill="#fff"/><path d="M514 559.5 H519.5 L522.3 562.3 V569.3 H514 Z" fill="#4f4e8e"/><path d="M519.3 559.5 L522.3 562.5 H519.3 Z" fill="#9a99c4"/><circle cx="420" cy="587.0" r="8.6" fill="#e5b712"/><path d="M418.3 587.3 V584.5999999999999 A2.2 2.2 0 0 1 422.7 584.5999999999999 V587.3" fill="none" stroke="#fff" stroke-width="1.5"/><rect x="416.1" y="586.9" width="8.8" height="5" fill="#fff"/><path d="M514 582.0 H519.5 L522.3 584.8 V591.8 H514 Z" fill="#4f4e8e"/><path d="M519.3 582.0 L522.3 585.0 H519.3 Z" fill="#9a99c4"/></svg>
<div style="position:absolute;left:1205.3px;top:142.6px;width:137.9px;height:74.2px;background:#fff;border:1px solid #dcdcdc;border-radius:4px;box-shadow:0 3px 9px rgba(0,0,0,0.13)"></div>
<div class="t" style="left:1222.20px;top:153px;font-size:11px;font-weight:bold;color:#55555f;letter-spacing:0.000px;transform:scaleX(0.8784);transform-origin:0 0;">Export Table</div>
<div class="t" style="left:1222.20px;top:175px;font-size:11px;font-weight:bold;color:#55555f;letter-spacing:0.000px;transform:scaleX(0.8768);transform-origin:0 0;">Add To Download List</div>
<div class="t" style="left:1222.00px;top:198px;font-size:11px;font-weight:bold;color:#55555f;letter-spacing:0.000px;transform:scaleX(0.8938);transform-origin:0 0;">Programmatic Options</div>
<div style="position:absolute;left:1212.7px;top:189.7px;width:117.3px;height:17.3px;border:4px solid #f50000"></div>

</body></html>
